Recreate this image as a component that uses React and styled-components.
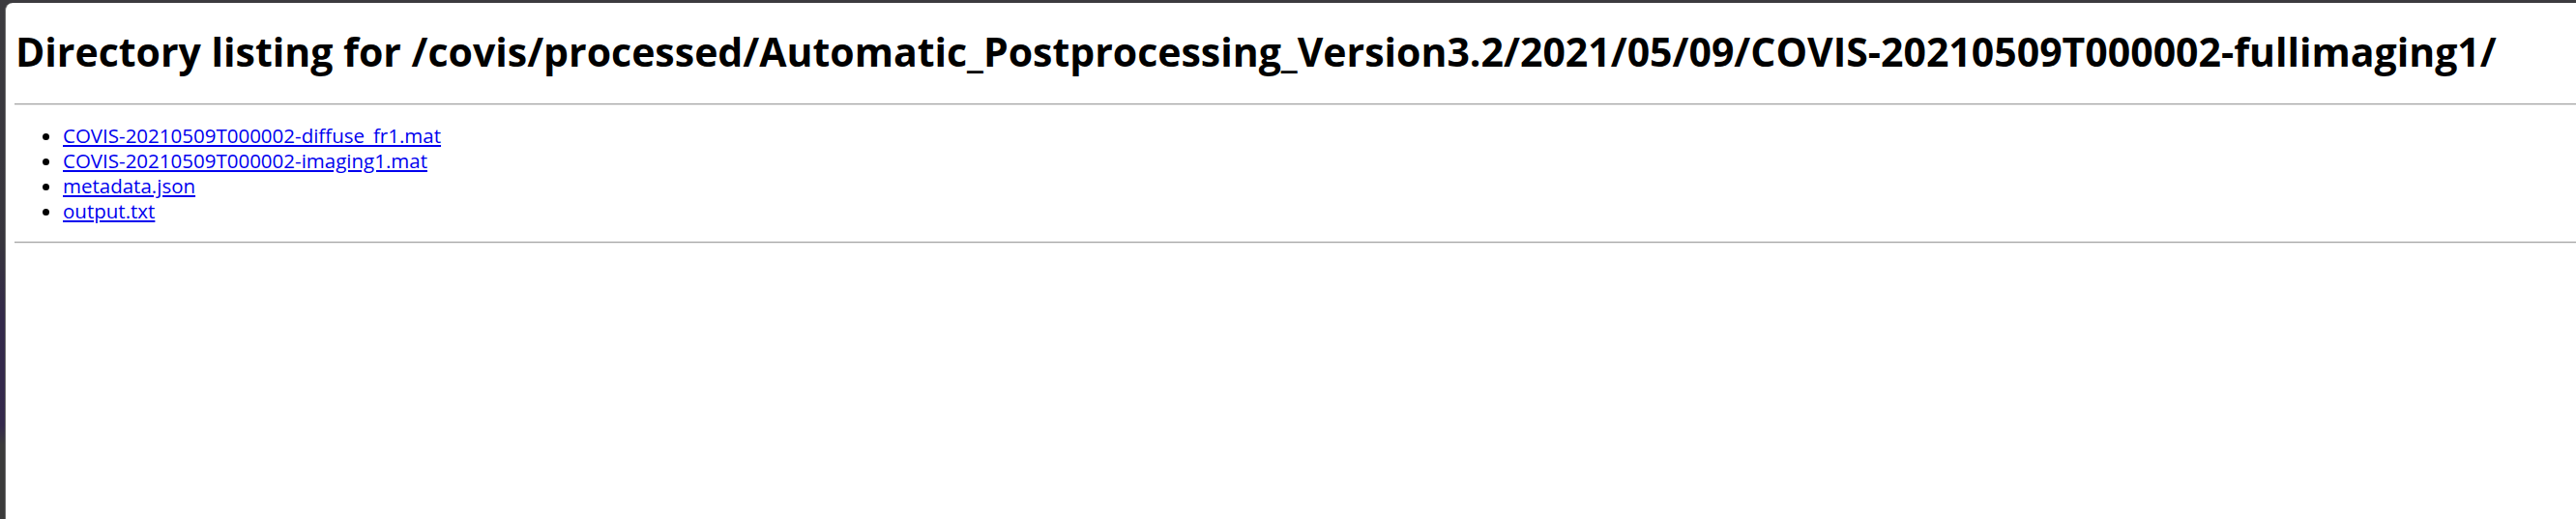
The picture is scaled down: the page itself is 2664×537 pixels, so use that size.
import React from "react";
import styled, { createGlobalStyle } from "styled-components";

const GlobalStyle = createGlobalStyle`
  html, body {
    margin: 0;
    padding: 0;
    background: #38373b;
  }
  #root {
    min-height: 537px;
  }
`;

const Window = styled.div`
  display: flex;
  box-sizing: border-box;
  min-height: 537px;
  padding: 3px 0 0 5px;
  background: linear-gradient(
    to bottom,
    #3c3b3f 0px,
    #37353d 250px,
    #33294a 330px,
    #34294c 440px,
    #3b3b3b 460px,
    #3b3b3b 537px
  );
`;

const Page = styled.main`
  flex: 1;
  box-sizing: border-box;
  background: #ffffff;
  border-top-left-radius: 8px;
  border-left: 1px solid #6e6e6e;
  padding: 0 0 0 9px;
  color: #000;
  font-family: "Open Sans", "Noto Sans", "Liberation Sans", sans-serif;
  overflow: hidden;
`;

const Title = styled.h1`
  margin: 24px 0 0 1px;
  font-size: 41px;
  line-height: 52px;
  font-weight: 700;
  white-space: nowrap;
`;

const Rule = styled.hr`
  height: 0;
  margin: ${(p) => p.$top}px 0 0 0;
  border: none;
  border-top: 1px solid #a3a3a3;
  border-bottom: 1px solid #e6e6e6;
`;

const List = styled.ul`
  margin: 18px 0 19px 0;
  padding: 0 0 0 50px;
  list-style: disc;
  font-size: 20.5px;
  line-height: 26px;
`;

const Item = styled.li`
  font-size: 20.5px;
  line-height: 26px;
`;

const FileLink = styled.a`
  font-size: 20.5px;
  color: #0000ee;
  text-decoration: underline;
  text-underline-offset: 2px;
`;

const files = [
  "COVIS-20210509T000002-diffuse_fr1.mat",
  "COVIS-20210509T000002-imaging1.mat",
  "metadata.json",
  "output.txt",
];

export default function App() {
  return (
    <>
      <GlobalStyle />
      <Window>
        <Page>
          <Title>
            Directory listing for
            /covis/processed/Automatic_Postprocessing_Version3.2/2021/05/09/COVIS-20210509T000002-fullimaging1/
          </Title>
          <Rule $top={28} />
          <List>
            {files.map((f) => (
              <Item key={f}>
                <FileLink href={f}>{f}</FileLink>
              </Item>
            ))}
          </List>
          <Rule $top={0} />
        </Page>
      </Window>
    </>
  );
}
